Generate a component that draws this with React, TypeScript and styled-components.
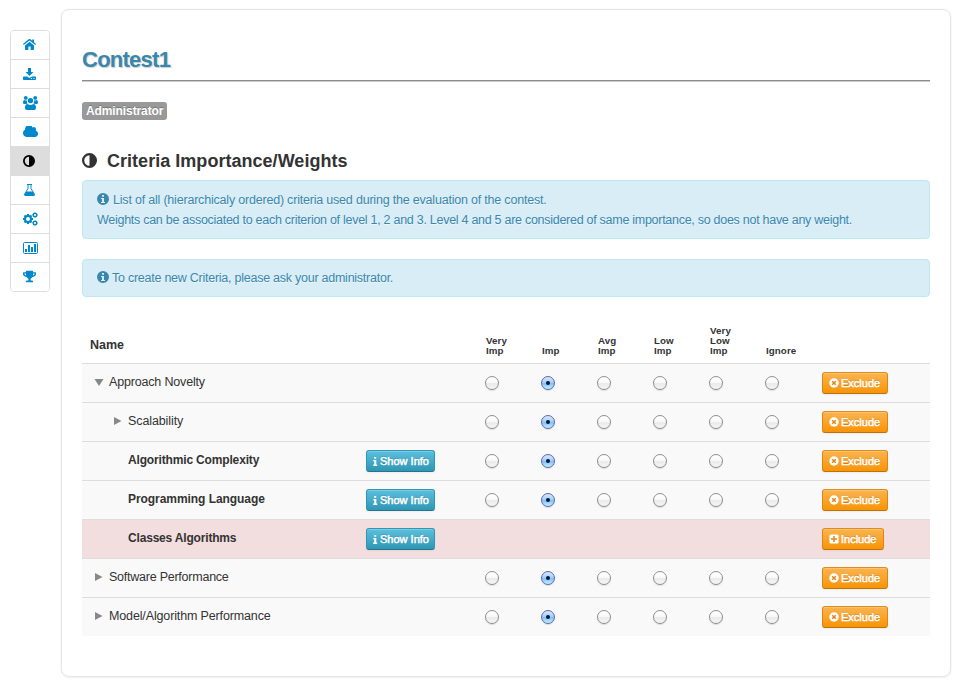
import React from 'react';
import styled, { createGlobalStyle, css } from 'styled-components';
import { FaTrophy } from 'react-icons/fa';

const Global = createGlobalStyle`
  * { box-sizing: border-box; }
  body {
    margin: 0;
    background: #fff;
    color: #333;
    font: 12.5px/20px "Liberation Sans", Arial, sans-serif;
  }
  h1, h2, p { margin: 0; }
  button { font-family: inherit; }
`;

const Page = styled.div`
  display: flex;
  align-items: flex-start;
  height: 684px;
  padding: 9px 6px 0 10px;
  overflow: hidden;
`;

const Sidebar = styled.nav`
  flex: none;
  width: 40px;
  margin: 21px 11px 0 0;
  border: 1px solid #ddd;
  border-radius: 4px;
  overflow: hidden;
`;

const NavItem = styled.a<{ $active?: boolean }>`
  display: flex;
  align-items: center;
  height: 29px;
  padding: 0 0 1px 12px;
  color: ${(p) => (p.$active ? '#000' : '#0088cc')};
  background: ${(p) => (p.$active ? '#ddd' : '#fff')};
  border-bottom: 1px solid #ddd;
  &:last-child { border-bottom: 0; height: 28px; }
  svg { display: block; flex: none; }
`;

const Card = styled.main`
  flex: 1;
  height: 668px;
  padding: 36px 20px 0;
  border: 1px solid #e5e5e5;
  border-radius: 8px;
  box-shadow: 0 1px 2px rgba(0, 0, 0, 0.05), 0 0 2px rgba(0, 0, 0, 0.06);
`;

const Title = styled.h1`
  height: 35px;
  color: #3a87ad;
  font-size: 22px;
  line-height: 28px;
  letter-spacing: -0.75px;
  border-bottom: 1px solid #8c8c8c;
  box-shadow: 0 1px 0 #ccc;
  text-shadow: 1px 1px 1px #ccc;
`;

const RoleLabel = styled.span`
  display: block;
  width: 85px;
  height: 18px;
  margin: 21px 0 30px;
  padding: 0 4px;
  color: #fff;
  background: #999;
  border-radius: 3px;
  font-size: 12px;
  font-weight: bold;
  line-height: 18px;
  letter-spacing: -0.1px;
  white-space: nowrap;
  text-shadow: 0 -1px 0 rgba(0, 0, 0, 0.25);
`;

const SectionTitle = styled.h2`
  display: flex;
  align-items: center;
  gap: 10px;
  height: 22px;
  margin-bottom: 8px;
  font-size: 18px;
  line-height: 22px;
  letter-spacing: 0.03px;
  svg { margin-bottom: 2px; }
`;

const Alert = styled.section<{ $compact?: boolean }>`
  margin-bottom: 20px;
  padding: ${(p) => (p.$compact ? '8px 14px' : '9px 14px 8px')};
  color: #3a87ad;
  background: #d9edf7;
  border: 1px solid #bce8f1;
  border-radius: 4px;
  text-shadow: 0 1px 0 rgba(255, 255, 255, 0.5);
  white-space: nowrap;
  svg { vertical-align: -1px; }
`;

const AlertLine = styled.p<{ $spacing: number; $gap: number }>`
  height: 20px;
  letter-spacing: ${(p) => p.$spacing}px;
  svg { margin-right: ${(p) => p.$gap}px; }
`;

const Grid = styled.div`
  display: grid;
  grid-template-columns: 276px 120px repeat(6, 56px) 116px;
`;

const Header = styled(Grid)`
  height: 46px;
  align-items: end;
  font-weight: bold;
`;

const NameHeading = styled.div`
  padding: 0 8px 8px;
  letter-spacing: -0.05px;
`;

const LevelHeading = styled.div`
  padding: 0 8px 7px;
  font-size: 9.75px;
  line-height: 10px;
  letter-spacing: 0.08px;
  white-space: pre;
`;

const Row = styled(Grid)<{ $excluded?: boolean }>`
  height: 39px;
  border-top: 1px solid #ddd;
  background: ${(p) => (p.$excluded ? '#f2dede' : '#f9f9f9')};
`;

const NameCell = styled.div<{ $depth: number; $bold?: boolean; $spacing: number }>`
  display: flex;
  height: 20px;
  margin-top: 8px;
  padding-left: ${(p) => 8 + p.$depth * 19}px;
  font-size: ${(p) => (p.$bold ? 12 : 12.5)}px;
  font-weight: ${(p) => (p.$bold ? 'bold' : 'normal')};
  letter-spacing: ${(p) => p.$spacing}px;
  white-space: nowrap;
`;

const Toggle = styled.span`
  display: flex;
  width: 19px;
  padding: 6px 0 0 4px;
`;

const Cell = styled.div`
  padding: 8px 8px 0;
`;

const Radio = styled.span<{ $checked?: boolean }>`
  display: flex;
  align-items: center;
  justify-content: center;
  width: 14px;
  height: 14px;
  margin: 4px 0 0 -1px;
  border: 1px solid #8e8e8e;
  border-radius: 50%;
  background: linear-gradient(#fff 0%, #f9f9f9 45%, #eaeaea 55%, #f7f7f7 100%);
  box-shadow: 0 1px 1px rgba(0, 0, 0, 0.12);
  ${(p) =>
    p.$checked &&
    css`
      border-color: #5f66a8;
      background: linear-gradient(#d5e8fc 0%, #a4cffa 45%, #80c0fa 55%, #c0f2ff 100%);
      &::after {
        content: '';
        width: 4px;
        height: 4px;
        border-radius: 50%;
        background: #07152c;
      }
    `}
`;

const Button = styled.button<{ $kind: 'info' | 'warning'; $width: number }>`
  display: flex;
  align-items: center;
  gap: 2px;
  width: ${(p) => p.$width}px;
  height: 22px;
  padding: 0 0 0 6px;
  color: #fff;
  border: 1px solid;
  border-radius: 3px;
  font-size: 11px;
  font-weight: normal;
  line-height: 18px;
  -webkit-text-stroke: 0.45px #fff;
  white-space: nowrap;
  text-shadow: 0 -1px 0 rgba(0, 0, 0, 0.25);
  box-shadow: inset 0 1px 0 rgba(255, 255, 255, 0.2), 0 1px 2px rgba(0, 0, 0, 0.05);
  ${(p) =>
    p.$kind === 'info'
      ? css`
          background: linear-gradient(#5bc0de, #2f96b4);
          border-color: #2f96b4 #2f96b4 #24748c;
        `
      : css`
          background: linear-gradient(#fbb450, #f89406);
          border-color: #e08c1c #dc8510 #bd7208;
        `}
`;

const cloudPath =
  'M1984 1152q0 159-112.5 271.5t-271.5 112.5h-1088q-185 0-316.5-131.5t-131.5-316.5q0-132 71-241.5t187-163.5q-2-28-2-43 0-212 150-362t362-150q158 0 286.5 88t187.5 230q70-62 166-62 106 0 181 75t75 181q0 75-41 138 129 30 213 134.5t84 239.5z';

const Home = () => (
  <svg width="13" height="11" viewBox="0 0 13 11" fill="currentColor">
    <path d="M6.5 2.700L2 6.400v3.900q0 .7.700.7h2.700V7.600h2.200V11h2.700q.7 0 .7-.7V6.400z" />
    <path d="M6.500 0q.5 0 .9.300l1.800 1.500V.5H11v2.800l2 1.700-.7 1L6.500 1.500.7 6 0 5 5.600.3Q6 0 6.500 0z" />
  </svg>
);
const Cloud = () => <svg width="15" height="11" viewBox="64 256 1920 1280" preserveAspectRatio="none" fill="currentColor"><path d={cloudPath} /></svg>;
const Download = () => (
  <svg width="13" height="12" viewBox="0 0 13 12" fill="currentColor">
    <path d="M5 0h3v4h2.500L6.500 8 2.500 4H5z" />
    <path fillRule="evenodd" d="M.7 8.500h3.500l1.300 1q1 .7 2 0l1.300-1h3.500q.7 0 .7.7v2.100q0 .7-.7.7H.7q-.7 0-.7-.7V9.200q0-.7.7-.7zM8 10v1h1v-1zm2.500 0v1h1v-1z" />
  </svg>
);
const Users = () => (
  <svg width="15" height="14" viewBox="0 0 15 14" fill="currentColor">
    <circle cx="2.800" cy="1.900" r="1.900" />
    <circle cx="12.200" cy="1.900" r="1.900" />
    <circle cx="7.500" cy="4.600" r="2.700" />
    <path d="M0 6.700Q0 4 1.200 4q1.400.8 2.700.3-.3 1.800.7 3.100-.9 0-1.600.6H1.400Q0 8 0 6.700zM15 6.700Q15 4 13.800 4q-1.400.8-2.700.3.3 1.800-.7 3.100.9 0 1.600.6h1.600Q15 8 15 6.700z" />
    <path d="M2 11.900Q2 8 4.600 8q2.900 1.800 5.800 0Q13 8 13 11.900q0 2.100-2 2.100H4q-2 0-2-2.100z" />
  </svg>
);
const Adjust = ({ size }: { size: number }) => (
  <svg width={size} height={size} viewBox="0 0 12 12">
    <circle cx="6" cy="6" r="5.100" fill="none" stroke="currentColor" strokeWidth="1.800" />
    <path d="M6 1a5 5 0 0 1 0 10z" fill="currentColor" />
  </svg>
);
const Flask = () => (
  <svg width="13" height="12" viewBox="0 0 13 12">
    <path d="M4 .5h5M5 .5v4L1.700 10q-.7 1.500.7 1.500h8.200q1.400 0 .7-1.500L8 4.500v-4" fill="none" stroke="currentColor" />
    <path d="M3.500 7.500h6l2 3.500-.8 1H2.300l-.8-1z" fill="currentColor" />
  </svg>
);
const gearTeeth = [0, 45, 90, 135];
const Gears = () => (
  <svg width="15" height="14" viewBox="0 0 15 14" fill="none" stroke="currentColor">
    <circle cx="5" cy="7" r="3" strokeWidth="2" />
    {gearTeeth.map((angle) => (
      <path key={angle} d="M5 2v2M5 10v2" strokeWidth="2" transform={`rotate(${angle} 5 7)`} />
    ))}
    <circle cx="12" cy="3" r="1.700" strokeWidth="1.300" />
    <circle cx="12" cy="11" r="1.700" strokeWidth="1.300" />
    {gearTeeth.map((angle) => (
      <g key={angle} strokeWidth="1">
        <path d="M12 .2v1M12 4.800v1" transform={`rotate(${angle} 12 3)`} />
        <path d="M12 8.200v1M12 12.800v1" transform={`rotate(${angle} 12 11)`} />
      </g>
    ))}
  </svg>
);
const Chart = () => (
  <svg width="15" height="12" viewBox="0 0 15 12">
    <rect x=".5" y=".5" width="14" height="11" rx="1" fill="none" stroke="currentColor" />
    <path d="M2 7h2v3H2zm3-4h2v7H5zm3 2h2v5H8zm3-3h2v8h-2z" fill="currentColor" shapeRendering="crispEdges" />
  </svg>
);
const InfoCircle = () => (
  <svg width="12" height="12" viewBox="0 0 12 12" fill="currentColor">
    <path fillRule="evenodd" d="M6 0a6 6 0 1 1 0 12A6 6 0 0 1 6 0zM5 2v1.700h2V2zM4 5v1h1v3H4v1h4V9H7V5z" />
  </svg>
);
const Info = () => (
  <svg width="5" height="9" viewBox="0 0 5 9" fill="currentColor">
    <path d="M1.200 0h2v1.800h-2zM.3 3h3v4.600H4.200V9H.2V7.600h1V4.200H.3z" />
  </svg>
);
const Remove = () => (
  <svg width="10" height="10" viewBox="0 0 10 10">
    <circle cx="5" cy="5" r="4.700" fill="currentColor" />
    <path d="M3.200 3.200l3.600 3.600M6.800 3.200L3.200 6.800" stroke="#df8518" strokeWidth="1.500" />
  </svg>
);
const Plus = () => (
  <svg width="10" height="10" viewBox="0 0 10 10">
    <rect x=".4" y=".4" width="9.200" height="9.200" rx="1.500" fill="currentColor" />
    <path d="M5 2v6M2 5h6" stroke="#e38a18" strokeWidth="1.500" />
  </svg>
);
const Triangle = ({ open }: { open?: boolean }) => (
  <svg width="10" height="8" viewBox="0 0 10 8" fill="#888">
    <path d={open ? 'M.5 1h9L5 8z' : 'M1 0v8l7.500-4z'} />
  </svg>
);

const navigation = [
  <Home />, <Download />, <Users />, <Cloud />, <Adjust size={12} />,
  <Flask />, <Gears />, <Chart />, <FaTrophy size={13} />,
];

const levels = ['Very\nImp', 'Imp', 'Avg\nImp', 'Low\nImp', 'Very\nLow\nImp', 'Ignore'];

type Criterion = { name: string; depth: number; toggle?: 'open' | 'closed'; info?: boolean; excluded?: boolean; spacing: number };

const criteria: Criterion[] = [
  { name: 'Approach Novelty', depth: 0, toggle: 'open', spacing: -0.17 },
  { name: 'Scalability', depth: 1, toggle: 'closed', spacing: -0.1 },
  { name: 'Algorithmic Complexity', depth: 1, info: true, spacing: -0.16 },
  { name: 'Programming Language', depth: 1, info: true, spacing: -0.06 },
  { name: 'Classes Algorithms', depth: 1, info: true, excluded: true, spacing: -0.18 },
  { name: 'Software Performance', depth: 0, toggle: 'closed', spacing: -0.24 },
  { name: 'Model/Algorithm Performance', depth: 0, toggle: 'closed', spacing: -0.14 },
];

export default function App() {
  return (
    <Page>
      <Global />
      <Sidebar>
        {navigation.map((icon, i) => <NavItem key={i} $active={i === 4}>{icon}</NavItem>)}
      </Sidebar>
      <Card>
        <Title>Contest1</Title>
        <RoleLabel>Administrator</RoleLabel>
        <SectionTitle><Adjust size={15} />Criteria Importance/Weights</SectionTitle>
        <Alert>
          <AlertLine $spacing={-0.2} $gap={4}><InfoCircle />List of all (hierarchicaly ordered) criteria used during the evaluation of the contest.</AlertLine>
          <AlertLine $spacing={-0.275} $gap={4}>Weights can be associated to each criterion of level 1, 2 and 3. Level 4 and 5 are considered of same importance, so does not have any weight.</AlertLine>
        </Alert>
        <Alert $compact>
          <AlertLine $spacing={-0.25} $gap={3}><InfoCircle />To create new Criteria, please ask your administrator.</AlertLine>
        </Alert>
        <Header>
          <NameHeading>Name</NameHeading>
          <div />
          {levels.map((level) => <LevelHeading key={level}>{level}</LevelHeading>)}
        </Header>
        {criteria.map((item) => (
          <Row key={item.name} $excluded={item.excluded}>
            <NameCell $depth={item.depth} $bold={item.info} $spacing={item.spacing}>
              <Toggle>{item.toggle && <Triangle open={item.toggle === 'open'} />}</Toggle>
              {item.name}
            </NameCell>
            <Cell>{item.info && <Button $kind="info" $width={69}><Info />Show Info</Button>}</Cell>
            {levels.map((level, i) => (
              <Cell key={level}>{!item.excluded && <Radio $checked={i === 1} />}</Cell>
            ))}
            <Cell>
              <Button $kind="warning" $width={item.excluded ? 62 : 66}>
                {item.excluded ? <Plus /> : <Remove />}
                {item.excluded ? 'Include' : 'Exclude'}
              </Button>
            </Cell>
          </Row>
        ))}
      </Card>
    </Page>
  );
}
